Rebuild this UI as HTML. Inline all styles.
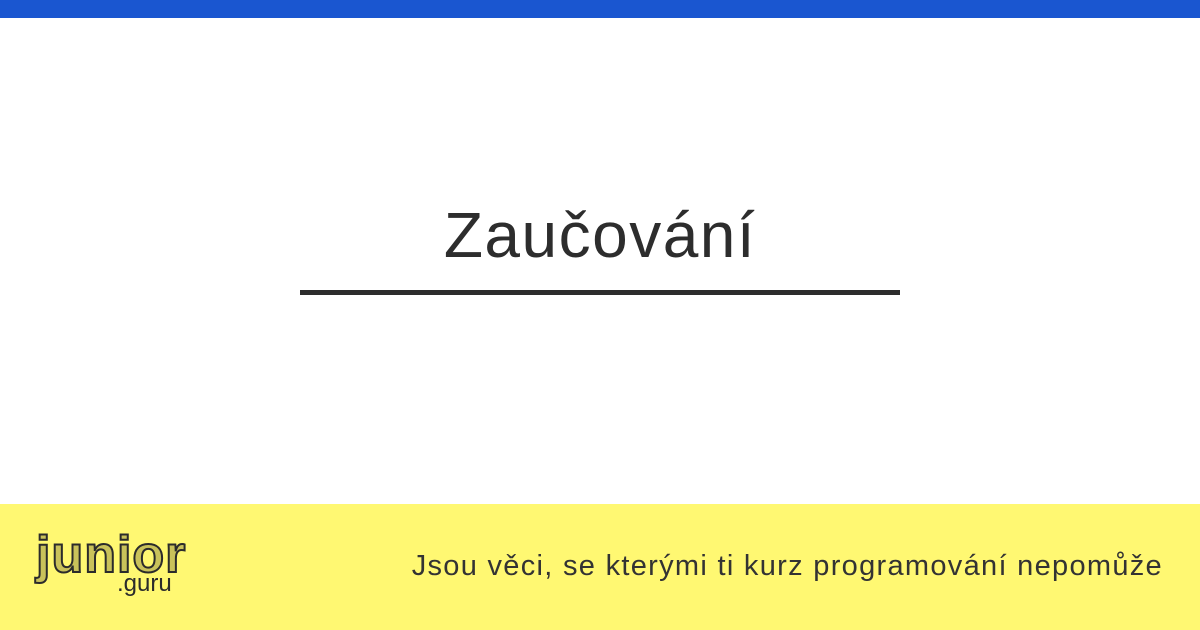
<!DOCTYPE html>
<html><head><meta charset="utf-8"><style>
html,body{margin:0;padding:0}
body{width:1200px;height:630px;position:relative;background:#fff;font-family:"Liberation Sans",sans-serif;overflow:hidden}
.top{position:absolute;left:0;top:0;width:1200px;height:18px;background:#1a56d0}
.title{position:absolute;left:0;width:1200px;top:198px;text-align:center;font-size:64px;color:#2d2d2d;letter-spacing:1.5px}
.line{position:absolute;left:300px;top:290px;width:600px;height:5px;background:#2d2d2d}
.foot{position:absolute;left:0;top:504px;width:1200px;height:126px;background:#fff872}
.txt{position:absolute;right:37px;top:550px;font-size:29px;color:#333;letter-spacing:1.3px;white-space:nowrap}
.logo{position:absolute;left:36px;top:525px;font-size:52px;font-weight:bold;color:#c9c25a;-webkit-text-stroke:2px #2b2b2b;letter-spacing:1px}
.guru{position:absolute;left:117px;top:570px;font-size:24px;color:#2b2b2b}
</style></head><body>
<div class="top"></div>
<div class="title">Zaučování</div>
<div class="line"></div>
<div class="foot"></div>
<div class="logo">junior</div>
<div class="guru">.guru</div>
<div class="txt">Jsou věci, se kterými ti kurz programování nepomůže</div>
</body></html>
